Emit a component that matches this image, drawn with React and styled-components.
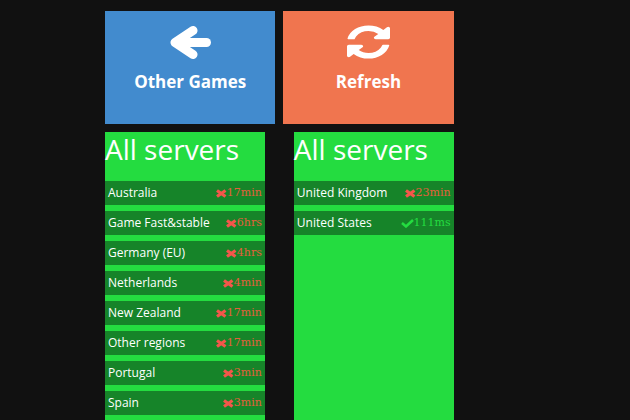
import React from 'react';
import styled, { createGlobalStyle } from 'styled-components';

//#region data
const leftServers = [
    { name: "Australia", ping: "17min" },
    { name: "Game Fast&stable", ping: "6hrs" },
    { name: "Germany (EU)", ping: "4hrs" },
    { name: "Netherlands", ping: "4min" },
    { name: "New Zealand", ping: "17min" },
    { name: "Other regions", ping: "17min" },
    { name: "Portugal", ping: "3min" },
    { name: "Spain", ping: "3min" },
];

const rightServers = [
    { name: "United Kingdom", ping: "23min" },
    { name: "United States", ping: "111ms", online: true },
];
//#endregion

//#region styles
const GlobalStyle = createGlobalStyle`
    * {
        box-sizing: border-box;
    }

    body {
        margin: 0;
        background: #111111;
        color: #ffffff;
        font-family: "Open Sans", "Noto Sans", sans-serif;
    }
`

const Page = styled.main`
    display: flex;
    flex-direction: column;
    gap: 8px;
    width: 72%;
    min-height: 100vh;
    padding: 11px 0 0 calc(100vw / 6);
`

const TileRow = styled.nav`
    display: grid;
    grid-template-columns: 1fr 1fr;
    gap: 8px;
`

const Tile = styled.button`
    display: flex;
    flex-direction: column;
    align-items: center;
    gap: 8px;
    height: 113px;
    padding: 13px 0 0;
    border: 0;
    background: ${(props) => props.$color};
    color: inherit;
    font: 700 17px/28px "Open Sans", "Noto Sans", sans-serif;
    cursor: pointer;
`

const TileIcon = styled.svg`
    width: 43px;
    height: 36px;
`

const Columns = styled.div`
    display: grid;
    flex: 1;
    grid-template-columns: 1fr 1fr;
    gap: 29px;
`

const Column = styled.section`
    background: #24dc40;
`

const Title = styled.h2`
    height: 49px;
    margin: 0;
    font-size: 28px;
    font-weight: 400;
    line-height: 34px;
    white-space: nowrap;
`

const ServerList = styled.ul`
    display: flex;
    flex-direction: column;
    gap: 6px;
    margin: 0;
    padding: 0;
    list-style: none;
`

const ServerRow = styled.li`
    display: flex;
    align-items: center;
    justify-content: space-between;
    height: 24px;
    padding: 0 3px;
    background: #168429;
    font-size: 12px;
    font-weight: 500;
    line-height: 24px;
    white-space: nowrap;
`

const Ping = styled.span`
    display: flex;
    align-items: center;
    color: ${(props) => (props.$online ? "#24dc40" : "#e2603c")};
    font: 11px/24px "DejaVu Serif", serif;
`

const PingIcon = styled.svg`
    width: ${(props) => (props.$online ? "13px" : "11px")};
    height: 9px;
    color: ${(props) => (props.$online ? "#24dc40" : "#f4564a")};
`
//#endregion

//#region icons
const ArrowLeftIcon = () => (
    <TileIcon viewBox="0 0 43 36" fill="none" stroke="currentColor" strokeWidth="9" strokeLinecap="round" strokeLinejoin="round" aria-hidden="true">
        <path d="M24 6.500 L6 18.500 L24 30.500" />
        <path d="M10 18.500 H37.500" />
        <path d="M6 18.500 L20 9 V28 Z" strokeWidth="2" fill="currentColor" />
    </TileIcon>
)

const RefreshIcon = () => (
    <TileIcon viewBox="0 -64 1536 1664" preserveAspectRatio="none" fill="currentColor" aria-hidden="true">
        <path d="M1511 928q0 5-1 7-64 268-268 434.500t-478 166.500q-146 0-282.500-55t-243.500-157l-129 129q-19 19-45 19t-45-19-19-45v-448q0-26 19-45t45-19h448q26 0 45 19t19 45-19 45l-137 137q71 66 161 102t187 36q134 0 250-65t186-179q11-17 53-117 8-23 30-23h192q13 0 22.500 9.500t9.500 22.500zm25-800v448q0 26-19 45t-45 19h-448q-26 0-45-19t-19-45 19-45l138-138q-148-137-349-137-134 0-250 65t-186 179q-11 17-53 117-8 23-30 23h-199q-13 0-22.500-9.500t-9.500-22.500v-7q65-268 270-434.500t480-166.500q146 0 284 55.500t245 156.500l130-129q19-19 45-19t45 19 19 45z" />
    </TileIcon>
)

const StatusIcon = ({ online }) => (
    online ? (
        <PingIcon $online viewBox="0 0 13 9" fill="none" stroke="currentColor" strokeWidth="2.500" role="img" aria-label="online">
            <path d="M1 4 L5 7.500 L12 1" />
        </PingIcon>
    ) : (
        <PingIcon viewBox="0 0 11 9" fill="none" stroke="currentColor" strokeWidth="3.200" role="img" aria-label="offline">
            <path d="M1 1.500 L9.500 7.500 M9.500 1.500 L1 7.500" />
        </PingIcon>
    )
)
//#endregion

const ServerColumn = ({ servers }) => (
    <Column>
        <Title>All servers</Title>
        <ServerList>
            {servers.map((server) => (
                <ServerRow key={server.name}>
                    <span>{server.name}</span>
                    <Ping $online={server.online}>
                        <StatusIcon online={server.online} />
                        {server.ping}
                    </Ping>
                </ServerRow>
            ))}
        </ServerList>
    </Column>
)

export default function App() {
    return (
        <>
            <GlobalStyle />
            <Page>
                <TileRow>
                    <Tile type="button" $color="#428bce">
                        <ArrowLeftIcon />
                        Other Games
                    </Tile>
                    <Tile type="button" $color="#f0754f">
                        <RefreshIcon />
                        Refresh
                    </Tile>
                </TileRow>
                <Columns>
                    <ServerColumn servers={leftServers} />
                    <ServerColumn servers={rightServers} />
                </Columns>
            </Page>
        </>
    )
}
